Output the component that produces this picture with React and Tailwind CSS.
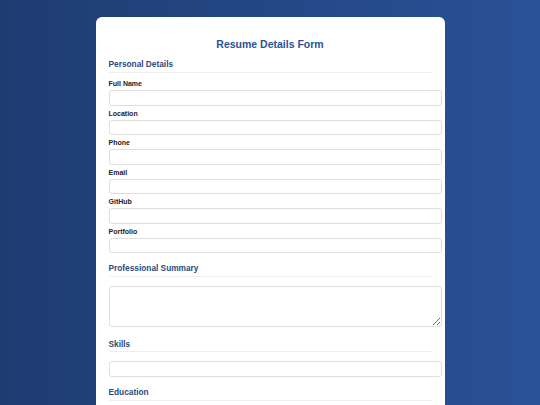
import React from "react";

const font = { fontFamily: '"Liberation Sans", Arial, Helvetica, sans-serif' };

function SectionHead({ children, className = "" }) {
  return (
    <h2
      className={`text-[8.3px] leading-[10px] font-bold text-[#2a4a80] pb-[2.5px] border-b border-[#eeeeee] mr-[10px] ${className}`}
    >
      {children}
    </h2>
  );
}

function Field({ label }) {
  return (
    <div className="flex flex-col mb-[4px]">
      <label className="block text-[7px] leading-[8px] font-bold text-[#222] mb-[2px]">
        {label}
      </label>
      <input
        type="text"
        className="block w-full h-[15.5px] bg-white border border-[#dedede] rounded-[3px] outline-none"
      />
    </div>
  );
}

export default function App() {
  return (
    <div
      className="w-full h-[405px] overflow-hidden bg-gradient-to-r from-[#1e3c72] to-[#2a5298]"
      style={font}
    >
      <div className="mt-[17px] mx-auto w-[349px] h-[600px] flex flex-col bg-white rounded-[6px] pl-[13px] pr-[3px] pt-[20px]">
        <h1 className="text-center text-[10.5px] leading-[14px] font-bold text-[#2a5298] pr-[10px]">
          Resume Details Form
        </h1>

        <SectionHead className="mt-[8px]">Personal Details</SectionHead>
        <div className="mt-[7.5px] flex flex-col">
          <Field label="Full Name" />
          <Field label="Location" />
          <Field label="Phone" />
          <Field label="Email" />
          <Field label="GitHub" />
          <Field label="Portfolio" />
        </div>

        <SectionHead className="mt-[6.3px]">Professional Summary</SectionHead>
        <textarea className="block w-full h-[40.7px] mt-[9.2px] bg-white border border-[#dedede] rounded-[3px] outline-none" />

        <SectionHead className="mt-[12px]">Skills</SectionHead>
        <input
          type="text"
          className="block w-full h-[15.5px] mt-[9px] bg-white border border-[#dedede] rounded-[3px] outline-none"
        />

        <SectionHead className="mt-[10.5px]">Education</SectionHead>
      </div>
    </div>
  );
}
